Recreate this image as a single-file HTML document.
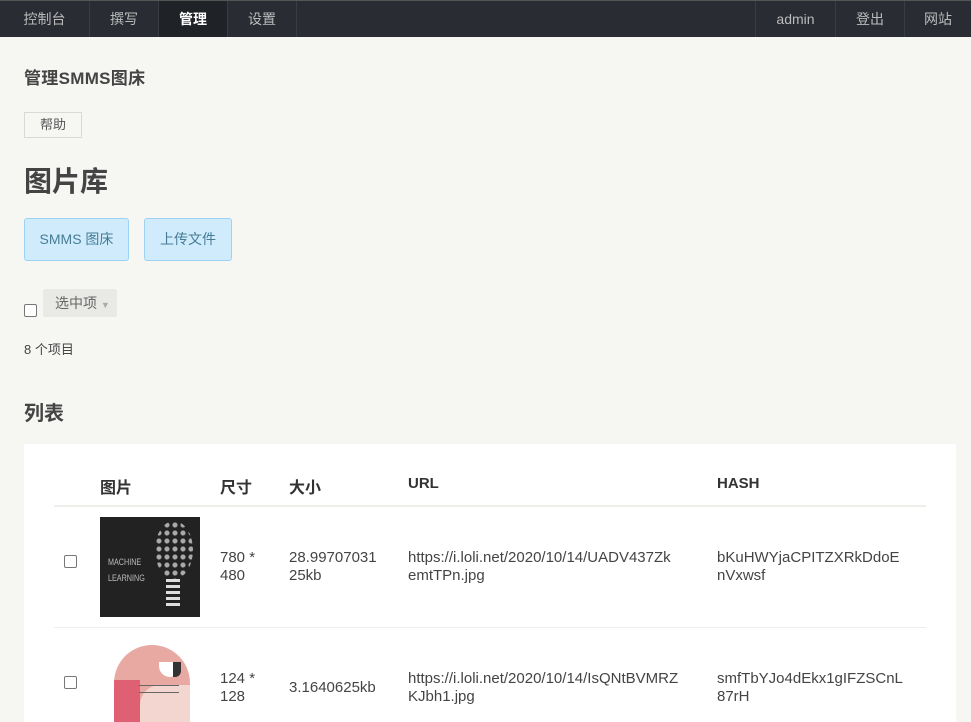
<!DOCTYPE html>
<html><head><meta charset="utf-8"><style>
*{box-sizing:border-box}
body{margin:0;width:971px;height:722px;overflow:hidden;background:#f6f6f3;font-family:"Liberation Sans","Noto Sans CJK SC",sans-serif;color:#444;font-size:14px}
.nav{height:37px;background:#292d33;border-top:1px solid #555;position:relative}
.nav a{position:absolute;top:0;height:36px;line-height:36px;color:#bbb;text-align:center;border-right:1px solid #383d45;font-size:14px}
.nav a.r{border-right:none;border-left:1px solid #383d45}
.nav a.on{background:#1f2226;color:#fff;font-weight:bold}
.abs{position:absolute}
.btn{position:absolute;background:#d0ecfc;border:1px solid #9dd3f2;border-radius:3px;color:#467b96;text-align:center;font-size:14px}
.tb{position:absolute;left:24px;top:444px;width:932px;height:278px;background:#fff}
.cb{position:absolute;width:13px;height:13px;border:1px solid #777;border-radius:2px;background:#fff}
.t{position:absolute;font-size:15px;line-height:18px;color:#444}
.h{position:absolute;font-weight:bold;font-size:16px;color:#333}
</style></head><body>
<div class="nav">
<a style="left:0;width:90px">控制台</a>
<a style="left:90px;width:69px">撰写</a>
<a class="on" style="left:159px;width:69px">管理</a>
<a style="left:228px;width:69px">设置</a>
<a class="r" style="left:755px;width:80px">admin</a>
<a class="r" style="left:835px;width:69px">登出</a>
<a class="r" style="left:904px;width:67px">网站</a>
</div>
<div class="abs" style="left:24px;top:64px;font-size:17px;font-weight:bold;color:#444;letter-spacing:.3px">管理SMMS图床</div>
<div class="abs" style="left:24px;top:112px;width:58px;height:26px;border:1px solid #d9d9d6;background:#f6f6f3;font-size:13px;line-height:24px;text-align:center;color:#555">帮助</div>
<div class="abs" style="left:24px;top:160px;font-size:28px;font-weight:bold;color:#444">图片库</div>
<div class="btn" style="left:24px;top:218px;width:105px;height:43px;line-height:41px">SMMS 图床</div>
<div class="btn" style="left:144px;top:218px;width:88px;height:43px;line-height:41px">上传文件</div>
<div class="cb" style="left:24px;top:304px"></div>
<div class="abs" style="left:43px;top:289px;width:74px;height:28px;background:#e9e9e6;border-radius:2px;line-height:28px;padding-left:12px;color:#666;font-size:14px">选中项 <span style="font-size:9px;color:#aaa">▼</span></div>
<div class="abs" style="left:24px;top:339px;font-size:13px;color:#444">8 个项目</div>
<div class="abs" style="left:24px;top:397px;font-size:20px;font-weight:bold;color:#444">列表</div>
<div class="tb"></div>
<div class="h" style="left:100px;top:474px">图片</div>
<div class="h" style="left:220px;top:474px">尺寸</div>
<div class="h" style="left:289px;top:474px">大小</div>
<div class="h" style="left:408px;top:475px;font-size:15px">URL</div>
<div class="h" style="left:717px;top:475px;font-size:15px">HASH</div>
<div class="abs" style="left:54px;top:505px;width:872px;height:2px;background:#eeeeea"></div>
<div class="cb" style="left:64px;top:555px"></div>
<div class="abs" style="left:100px;top:517px;width:100px;height:100px;background:#222">
<div class="abs" style="left:8px;top:37px;color:#bbb;font-size:9px;line-height:16px;transform:scaleX(.8);transform-origin:left">MACHINE<br>LEARNING</div>
<div class="abs" style="left:55px;top:4px;width:38px;height:58px;border-radius:50%;background:radial-gradient(circle,#aaa 2px,transparent 3px) 0 0/8px 8px"></div>
<div class="abs" style="left:66px;top:62px;width:14px;height:28px;background:repeating-linear-gradient(#ddd 0 3px,#222 3px 6px)"></div>
</div>
<div class="t" style="left:220px;top:549px">780 *<br>480</div>
<div class="t" style="left:289px;top:549px">28.99707031<br>25kb</div>
<div class="t" style="left:408px;top:549px">https://i.loli.net/2020/10/14/UADV437Zk<br>emtTPn.jpg</div>
<div class="t" style="left:717px;top:549px">bKuHWYjaCPITZXRkDdoE<br>nVxwsf</div>
<div class="abs" style="left:54px;top:627px;width:872px;height:1px;background:#eeeeea"></div>
<div class="cb" style="left:64px;top:676px"></div>
<div class="abs" style="left:114px;top:645px;width:76px;height:77px;border-radius:38px 38px 0 0;background:#e8a9a3;overflow:hidden">
<div class="abs" style="left:0;top:35px;width:26px;height:50px;background:#e06073"></div>
<div class="abs" style="left:26px;top:40px;width:50px;height:40px;background:#f3d6d0;border-radius:20px 0 0 0"></div>
<div class="abs" style="left:45px;top:17px;width:22px;height:15px;background:#fff;border-radius:0 0 11px 11px"></div>
<div class="abs" style="left:59px;top:17px;width:8px;height:15px;background:#333;border-radius:0 0 6px 0"></div>
<div class="abs" style="left:25px;top:40px;width:40px;height:8px;border-top:1px solid #666;border-bottom:1px solid #666"></div>
</div>
<div class="t" style="left:220px;top:670px">124 *<br>128</div>
<div class="t" style="left:289px;top:679px">3.1640625kb</div>
<div class="t" style="left:408px;top:670px">https://i.loli.net/2020/10/14/IsQNtBVMRZ<br>KJbh1.jpg</div>
<div class="t" style="left:717px;top:670px">smfTbYJo4dEkx1gIFZSCnL<br>87rH</div>
</body></html>
